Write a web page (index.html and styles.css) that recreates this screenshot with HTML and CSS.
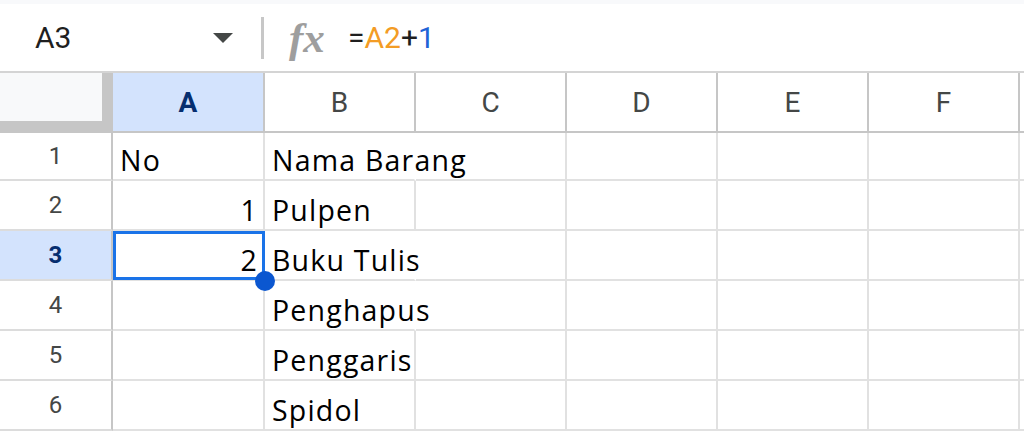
FILE: index.html
```html
<!DOCTYPE html>
<html lang="id">
<head>
  <meta charset="UTF-8">
  <title>Spreadsheet</title>
  <link rel="stylesheet" href="styles.css">
</head>
<body>
  <div class="top-strip"></div>

  <div class="formula-bar">
    <div class="name-box">
      <span class="name-ref">A3</span>
      <span class="caret"></span>
    </div>
    <div class="divider"></div>
    <span class="fx">fx</span>
    <div class="formula">=<span class="ref">A2</span>+<span class="num">1</span></div>
  </div>

  <div class="sheet">
    <!-- header -->
    <div class="corner"></div>
    <div class="col-head active">A</div>
    <div class="col-head">B</div>
    <div class="col-head">C</div>
    <div class="col-head">D</div>
    <div class="col-head">E</div>
    <div class="col-head">F</div>
    <div class="col-head"></div>

    <!-- baris 1 -->
    <div class="row-head">1</div>
    <div class="cell">No</div>
    <div class="cell spill">Nama Barang</div>
    <div class="cell"></div>
    <div class="cell"></div>
    <div class="cell"></div>
    <div class="cell"></div>
    <div class="cell"></div>

    <!-- baris 2 -->
    <div class="row-head">2</div>
    <div class="cell number">1</div>
    <div class="cell">Pulpen</div>
    <div class="cell"></div>
    <div class="cell"></div>
    <div class="cell"></div>
    <div class="cell"></div>
    <div class="cell"></div>

    <!-- baris 3 -->
    <div class="row-head active">3</div>
    <div class="cell number selected">2<span class="handle"></span></div>
    <div class="cell spill">Buku Tulis</div>
    <div class="cell"></div>
    <div class="cell"></div>
    <div class="cell"></div>
    <div class="cell"></div>
    <div class="cell"></div>

    <!-- baris 4 -->
    <div class="row-head">4</div>
    <div class="cell"></div>
    <div class="cell spill">Penghapus</div>
    <div class="cell"></div>
    <div class="cell"></div>
    <div class="cell"></div>
    <div class="cell"></div>
    <div class="cell"></div>

    <!-- baris 5 -->
    <div class="row-head">5</div>
    <div class="cell"></div>
    <div class="cell">Penggaris</div>
    <div class="cell"></div>
    <div class="cell"></div>
    <div class="cell"></div>
    <div class="cell"></div>
    <div class="cell"></div>

    <!-- baris 6 -->
    <div class="row-head">6</div>
    <div class="cell"></div>
    <div class="cell">Spidol</div>
    <div class="cell"></div>
    <div class="cell"></div>
    <div class="cell"></div>
    <div class="cell"></div>
    <div class="cell"></div>
  </div>
</body>
</html>
```

FILE: styles.css
```css
* {
  box-sizing: border-box;
}
body {
  margin: 0;
  background: #fff;
  font-family: Roboto, "Liberation Sans", sans-serif;
  overflow: hidden;
}
.top-strip {
  height: 4px;
  background: #f8f9fb;
}
.formula-bar {
  display: flex;
  align-items: center;
  height: 69px;
  border-bottom: 2px solid #d4d4d4;
}
.name-box {
  display: flex;
  align-items: center;
  justify-content: space-between;
  width: 261px;
  padding: 0 28px 0 35px;
}
.name-ref {
  font-size: 30px;
  color: #1f1f1f;
}
.caret {
  width: 0;
  height: 0;
  border-left: 10.5px solid transparent;
  border-right: 10.5px solid transparent;
  border-top: 10px solid #444746;
}
.divider {
  width: 3px;
  height: 42px;
  background: #c7c7c7;
}
.fx {
  width: 36px;
  margin: 0 23px 0 25px;
  font-family: "Liberation Serif", serif;
  font-style: italic;
  font-weight: bold;
  font-size: 43px;
  line-height: 1;
  color: #9e9e9e;
}
.formula {
  font-size: 30px;
  color: #1f1f1f;
}
.formula .ref {
  color: #f39c25;
}
.formula .num {
  color: #1f63d6;
}
.sheet {
  display: grid;
  grid-template-columns: 113px 152px repeat(5, 151px) 1fr;
  grid-template-rows: 60px 48px repeat(5, 50px);
}
.corner {
  background: #f8f9fa;
  border-right: 11px solid #c6c6c6;
  border-bottom: 12px solid #c6c6c6;
}
.col-head {
  display: flex;
  align-items: center;
  justify-content: center;
  border-right: 2px solid #c6c6c6;
  border-bottom: 2px solid #c6c6c6;
  font-size: 28px;
  color: #444746;
}
.row-head {
  display: flex;
  align-items: center;
  justify-content: center;
  border-right: 2px solid #c6c6c6;
  border-bottom: 2px solid #dcdcdc;
  font-size: 24px;
  color: #444746;
}
.col-head.active,
.row-head.active {
  background: #d3e3fd;
  color: #062e6f;
  font-weight: bold;
}
.cell {
  display: flex;
  align-items: flex-end;
  padding: 0 7px;
  border-right: 2px solid #e1e1e1;
  border-bottom: 2px solid #e1e1e1;
  font-family: "Open Sans", sans-serif;
  font-weight: 500;
  font-size: 28.5px;
  line-height: 38px;
  letter-spacing: 1.2px;
  color: #000;
  white-space: nowrap;
}
.cell.number {
  justify-content: flex-end;
  padding-right: 5px;
}
.cell.spill {
  border-right-color: transparent;
}
.cell.selected {
  position: relative;
}
.cell.selected::after {
  content: '';
  position: absolute;
  top: 0;
  left: 0;
  right: -2px;
  bottom: -1px;
  border: 3px solid #1a73e8;
}
.handle {
  position: absolute;
  right: -12px;
  bottom: -12px;
  width: 20px;
  height: 20px;
  border-radius: 50%;
  background: #0b57d0;
  z-index: 2;
}
```
